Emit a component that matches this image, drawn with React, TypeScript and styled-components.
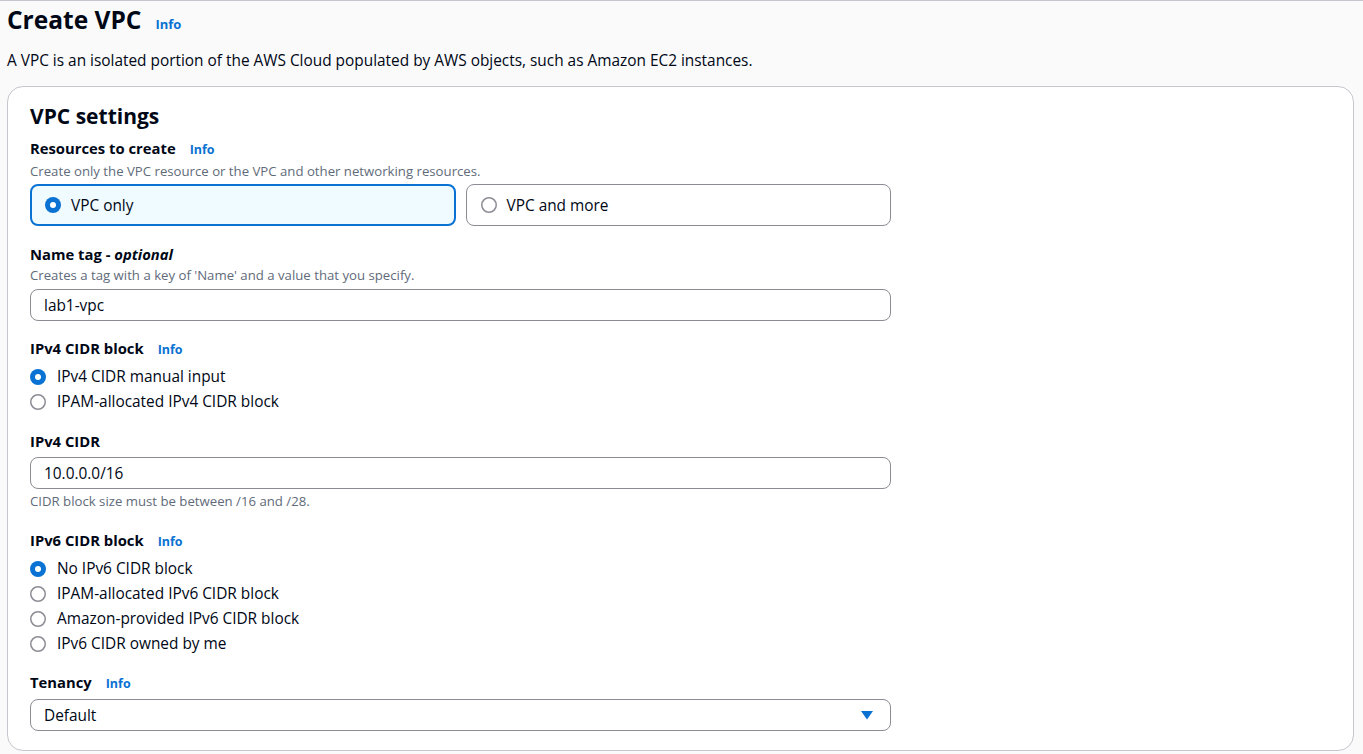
import React from "react";
import styled, { createGlobalStyle } from "styled-components";

const COLOR = {
  text: "#000716",
  muted: "#5f6b7a",
  link: "#0972d3",
  border: "#8c8c94",
  divider: "#c6c6cd",
  page: "#fafafa",
  tileBg: "#f0fbff",
};

const GlobalStyle = createGlobalStyle`
  body {
    margin: 0;
    background: ${COLOR.page};
    font-family: "Open Sans", "Noto Sans", sans-serif;
    color: ${COLOR.text};
  }
`;

const Page = styled.div`
  border-top: 1px solid ${COLOR.divider};
  padding: 0 9px 0 7px;
  min-height: 753px;
`;

const Header = styled.div`
  display: flex;
  align-items: baseline;
  gap: 14px;
  padding-top: 2px;
`;

const Title = styled.h1`
  margin: 0;
  font-size: 24.5px;
  line-height: 34px;
  font-weight: 700;
`;

const InfoLink = styled.a<{ small?: boolean }>`
  color: ${COLOR.link};
  font-weight: 700;
  font-size: ${p => (p.small ? "12.5px" : "13px")};
  text-decoration: none;
`;

const Lead = styled.p`
  margin: 14px 0 0;
  font-size: 15.4px;
  line-height: 20px;
`;

const Card = styled.section`
  margin-top: 15px;
  background: #fff;
  border: 1px solid ${COLOR.divider};
  border-radius: 16px;
  padding: 15px 22px 19px;
`;

const CardTitle = styled.h2`
  margin: 0;
  font-size: 21px;
  line-height: 28px;
  font-weight: 700;
`;

const Field = styled.div<{ gap?: number }>`
  width: 861px;
  margin-top: ${p => p.gap ?? 16}px;
`;

const Label = styled.div`
  display: flex;
  align-items: baseline;
  gap: 14px;
  font-size: 14.8px;
  line-height: 22px;
  font-weight: 700;
`;

const Hint = styled.div<{ gap?: number }>`
  margin-top: ${p => p.gap ?? 1}px;
  font-size: 13.2px;
  line-height: 18px;
  color: ${COLOR.muted};
`;

const Tiles = styled.div`
  display: grid;
  grid-template-columns: 1fr 1fr;
  gap: 10px;
  margin-top: 4px;
`;

const Tile = styled.div<{ selected?: boolean }>`
  display: flex;
  align-items: center;
  gap: 10px;
  height: 42px;
  box-sizing: border-box;
  padding: 0 ${p => (p.selected ? "13px" : "14px")};
  border-radius: 8px;
  border: ${p => (p.selected ? `2px solid ${COLOR.link}` : `1px solid ${COLOR.border}`)};
  background: ${p => (p.selected ? COLOR.tileBg : "#fff")};
  font-size: 15.4px;
`;

const Input = styled.div<{ gap?: number }>`
  display: flex;
  align-items: center;
  justify-content: space-between;
  height: 32px;
  box-sizing: border-box;
  margin-top: ${p => p.gap ?? 5}px;
  padding: 0 17px 0 13px;
  border: 1px solid ${COLOR.border};
  border-radius: 8px;
  background: #fff;
  font-size: 15.4px;
`;

const RadioList = styled.div`
  margin-top: 3px;
`;

const RadioRow = styled.div`
  display: flex;
  align-items: center;
  gap: 11px;
  height: 25px;
  font-size: 15.4px;
`;

const Radio = ({ checked }: { checked?: boolean }) =>
  checked ? (
    <svg width="16" height="16" viewBox="0 0 16 16">
      <circle cx="8" cy="8" r="8" fill={COLOR.link} />
      <circle cx="8" cy="8" r="3" fill="#fff" />
    </svg>
  ) : (
    <svg width="16" height="16" viewBox="0 0 16 16">
      <circle cx="8" cy="8" r="7.25" fill="#fff" stroke={COLOR.border} strokeWidth="1.5" />
    </svg>
  );

const Caret = () => (
  <svg width="12" height="10" viewBox="0 0 12 10">
    <path d="M0 1h12L6 9.5z" fill={COLOR.link} />
  </svg>
);

const RadioGroup = ({ options, value }: { options: string[]; value: string }) => (
  <RadioList>
    {options.map(o => (
      <RadioRow key={o}>
        <Radio checked={o === value} />
        {o}
      </RadioRow>
    ))}
  </RadioList>
);

export default function App() {
  return (
    <>
      <GlobalStyle />
      <Page>
        <Header>
          <Title>Create VPC</Title>
          <InfoLink>Info</InfoLink>
        </Header>
        <Lead>
          A VPC is an isolated portion of the AWS Cloud populated by AWS objects, such as Amazon EC2 instances.
        </Lead>
        <Card>
          <CardTitle>VPC settings</CardTitle>
          <Field gap={7}>
            <Label>
              Resources to create <InfoLink small>Info</InfoLink>
            </Label>
            <Hint>Create only the VPC resource or the VPC and other networking resources.</Hint>
            <Tiles>
              <Tile selected>
                <Radio checked />
                VPC only
              </Tile>
              <Tile>
                <Radio />
                VPC and more
              </Tile>
            </Tiles>
          </Field>
          <Field gap={17}>
            <Label>
              <span>
                Name tag - <em>optional</em>
              </span>
            </Label>
            <Hint>Creates a tag with a key of 'Name' and a value that you specify.</Hint>
            <Input>lab1-vpc</Input>
          </Field>
          <Field>
            <Label>
              IPv4 CIDR block <InfoLink small>Info</InfoLink>
            </Label>
            <RadioGroup
              value="IPv4 CIDR manual input"
              options={["IPv4 CIDR manual input", "IPAM-allocated IPv4 CIDR block"]}
            />
          </Field>
          <Field>
            <Label>IPv4 CIDR</Label>
            <Input gap={5}>10.0.0.0/16</Input>
            <Hint gap={3}>CIDR block size must be between /16 and /28.</Hint>
          </Field>
          <Field gap={19}>
            <Label>
              IPv6 CIDR block <InfoLink small>Info</InfoLink>
            </Label>
            <RadioGroup
              value="No IPv6 CIDR block"
              options={[
                "No IPv6 CIDR block",
                "IPAM-allocated IPv6 CIDR block",
                "Amazon-provided IPv6 CIDR block",
                "IPv6 CIDR owned by me",
              ]}
            />
          </Field>
          <Field gap={15}>
            <Label>
              Tenancy <InfoLink small>Info</InfoLink>
            </Label>
            <Input gap={4}>
              Default
              <Caret />
            </Input>
          </Field>
        </Card>
      </Page>
    </>
  );
}
